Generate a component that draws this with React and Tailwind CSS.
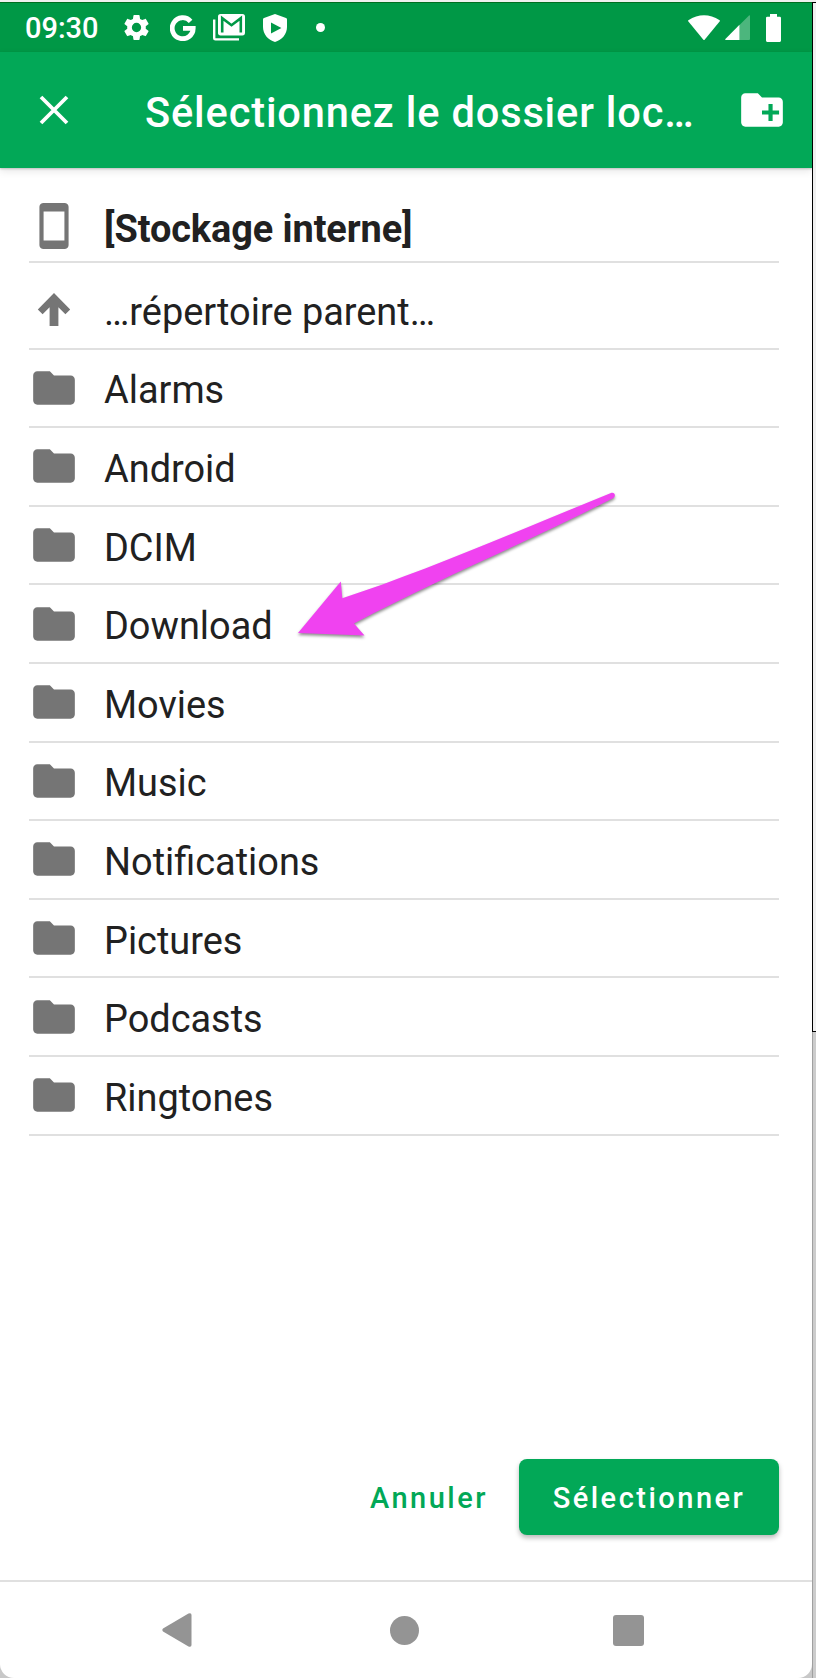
const folders = [
  "Alarms",
  "Android",
  "DCIM",
  "Download",
  "Movies",
  "Music",
  "Notifications",
  "Pictures",
  "Podcasts",
  "Ringtones",
];

function FolderIcon() {
  return (
    <svg viewBox="0 0 24 24" className="h-[50px] w-[50px] fill-[#757575]">
      <path d="M10 4H4c-1.1 0-2 .9-2 2v12c0 1.1.9 2 2 2h16c1.1 0 2-.9 2-2V8c0-1.1-.9-2-2-2h-8z" />
    </svg>
  );
}

function StatusBar() {
  return (
    <div className="flex h-[50px] items-center border-t border-[#006f20] bg-[#009846] pl-[25px] text-white">
      <span className="w-[99px] pt-px text-[29px] font-medium leading-[34px]">09:30</span>
      <svg viewBox="0 0 24 24" className="h-[31px] w-[31px] -ml-[3px] shrink-0 fill-white">
        <path d="M19.14 12.94c.04-.3.06-.61.06-.94s-.02-.64-.07-.94l2.03-1.58c.18-.14.23-.41.12-.61l-1.92-3.32c-.12-.22-.37-.29-.59-.22l-2.39.96c-.5-.38-1.03-.7-1.62-.94l-.36-2.54c-.04-.24-.24-.41-.48-.41h-3.84c-.24 0-.43.17-.47.41l-.36 2.54c-.59.24-1.13.57-1.62.94l-2.39-.96c-.22-.08-.47 0-.59.22L2.74 8.87c-.12.21-.08.47.12.61l2.03 1.58c-.05.3-.09.63-.09.94s.02.64.07.94l-2.03 1.58c-.18.14-.23.41-.12.61l1.92 3.32c.12.22.37.29.59.22l2.39-.96c.5.38 1.03.7 1.62.94l.36 2.54c.05.24.24.41.48.41h3.84c.24 0 .44-.17.47-.41l.36-2.54c.59-.24 1.13-.56 1.62-.94l2.39.96c.22.08.47 0 .59-.22l1.92-3.32c.12-.22.07-.47-.12-.61zM12 15.6a3.6 3.6 0 1 1 0-7.2 3.6 3.6 0 0 1 0 7.2z" />
      </svg>
      <svg viewBox="0 0 26 26" className="ml-[18px] h-[26px] w-[26px] shrink-0" fill="none" stroke="#fff" strokeWidth="4.8">
        <path d="M20.6 6.3A10.5 10.5 0 1 0 23.2 13.4H13" />
      </svg>
      <svg viewBox="0 0 32 27" className="ml-[17px] h-[27px] w-[32px] shrink-0" fill="none">
        <path d="M1.2 5.5V24.2Q1.2 25.4 2.4 25.4H26" stroke="#fff" strokeWidth="2.4" />
        <rect x="5" y="0" width="27" height="21.4" rx="2.6" fill="#fff" />
        <path d="M9.2 18.6V4.2L18.5 11.2L27.8 4.2V18.6" stroke="#009846" strokeWidth="2.6" />
      </svg>
      <svg viewBox="0 0 24 28" className="ml-[18px] h-[28px] w-[24px] shrink-0 fill-white" fillRule="evenodd">
        <path d="M12 0L23 4Q24 4.3 24 5.5V13C24 20 19 26 12 28C5 26 0 20 0 13V5.5Q0 4.3 1 4ZM8 8.4V19.4L18.4 13.9Z" />
      </svg>
      <span className="ml-[29px] h-[9px] w-[9px] rounded-full bg-white" />
      <div className="ml-auto mr-[31px] flex items-center">
        <svg viewBox="0 0 32 26" className="h-[26px] w-[32px] fill-white">
          <path d="M0.3 5.2Q16-4.6 31.7 5.2L32 6L16.6 24.8Q16 25.4 15.4 24.8L0 6Z" />
        </svg>
        <svg viewBox="0 0 25 25" className="ml-[5px] h-[25px] w-[25px]">
          <path d="M24 .4Q25 0 25 1V24Q25 25 24 25H14.5V10Z" fill="#4cb67d" />
          <path d="M14.5 9.8V25H.8Q-.3 24.7.4 23.9Z" fill="#fff" />
        </svg>
        <svg viewBox="0 0 15 28" className="ml-4 h-[28px] w-[15px] fill-white">
          <path d="M4 0H11V2.8H13.8Q15 2.8 15 4V26.6Q15 28 13.8 28H1.2Q0 28 0 26.6V4Q0 2.8 1.2 2.8H4Z" />
        </svg>
      </div>
    </div>
  );
}

function Toolbar() {
  return (
    <header className="relative flex h-[116px] items-center bg-[#02a857] text-white shadow-[0_1px_2px_rgba(0,0,0,0.2),0_3px_8px_rgba(0,0,0,0.1)]">
      <svg viewBox="0 0 30 30" className="ml-[39px] h-[30px] w-[30px] shrink-0" stroke="#fff" strokeWidth="3.8">
        <path d="M2 2L28 28M28 2L2 28" />
      </svg>
      <h1 className="ml-[76px] w-[592px] whitespace-nowrap pt-[5px] text-[41.6px] font-medium leading-[50px] tracking-[0.83px]">
        Sélectionnez le dossier loc…
      </h1>
      <svg viewBox="0 0 24 24" className="h-[50px] w-[50px] shrink-0 fill-white" fillRule="evenodd">
        <path d="M20 6h-8l-2-2H4C2.9 4 2 4.9 2 6v12c0 1.1.9 2 2 2h16c1.1 0 2-.9 2-2V8c0-1.1-.9-2-2-2zM20.2 14.2h-3.1v3.1h-2v-3.1H12v-2h3.1V9.1h2v3.1h3.1z" />
      </svg>
    </header>
  );
}

export default function App() {
  return (
    <div className="relative flex h-[1678px] w-[816px] overflow-hidden bg-[#c8c8c8] font-[Roboto,sans-serif] text-[#212121]">
      <div className="flex h-full w-[812px] shrink-0 flex-col overflow-hidden rounded-b-[14px] bg-white">
        <div className="h-[2px] bg-[#f0f0f0]" />
        <StatusBar />
        <Toolbar />
        <ul className="mx-[29px] w-[750px] text-[37.9px] leading-[44px]">
          <li className="flex h-[94.6px] items-center border-b-2 border-[#e0e0e0] pt-[24px]">
            <svg viewBox="0 0 24 24" className="h-[50px] w-[50px] fill-[#757575]">
              <path d="M17 1H7c-1.1 0-2 .7-2 1.8v18.4C5 22.3 5.9 23 7 23h10c1.1 0 2-.7 2-1.8V2.8C19 1.7 18.1 1 17 1zM17 19H7V5h10z" />
            </svg>
            <span className="ml-[25px] pt-[5px] font-bold tracking-[-0.08px]">[Stockage interne]</span>
          </li>
          <li className="flex h-[87px] items-center border-b-2 border-[#e0e0e0] pt-[9px]">
            <svg viewBox="0 0 50 50" className="h-[50px] w-[50px] fill-[#757575]">
              <path d="M25 8L41.2 24.5L36.4 29.2L29.4 22.2V41H20.6V22.2L13.6 29.2L8.8 24.5Z" />
            </svg>
            <span className="ml-[25px] pt-[5px]">…répertoire parent…</span>
          </li>
          {folders.map((name) => (
            <li key={name} className="flex h-[78.6px] items-center border-b-2 border-[#e0e0e0]">
              <FolderIcon />
              <span className="ml-[25px] pt-[5px]">{name}</span>
            </li>
          ))}
        </ul>
        <div className="mt-auto flex h-[121px] justify-end pr-[33px] text-[29px] font-medium">
          <button className="mr-[31px] h-[76px] pt-[4px] tracking-[2.5px] text-[#02a857]">Annuler</button>
          <button className="h-[76px] w-[260px] rounded-[8px] bg-[#02a857] pt-[4px] tracking-[2.5px] text-white shadow-[0_3px_5px_rgba(0,0,0,0.27)]">
            Sélectionner
          </button>
        </div>
        <nav className="flex h-[98px] items-center border-t-[2px] border-[#e0e0e0] pl-[162px]">
          <svg viewBox="0 0 30 34" className="h-[34px] w-[30px] fill-[#949494]">
            <path d="M1 15.5L26.5.5Q29.5-.5 29.5 2V32Q29.5 34.5 26.5 33.5L1 18.5Q-.3 17 1 15.5Z" />
          </svg>
          <span className="ml-[198px] h-[29px] w-[29px] rounded-full bg-[#949494]" />
          <span className="ml-[194px] h-[31px] w-[31px] rounded-[3px] bg-[#949494]" />
        </nav>
      </div>
      <div className="flex w-[4px] flex-col">
        <div className="h-[2px] bg-[#f0f0f0]" />
        <div className="h-[1030px] border-y border-l border-black bg-[#f0f0f0]" />
        <div className="flex-1 border-l border-[#a0a0a0] bg-[#cccccc]" />
      </div>
      <svg
        viewBox="280 470 360 200"
        className="absolute left-[280px] top-[470px] h-[200px] w-[360px] fill-[#f042f0] drop-shadow-[0_2px_1.5px_rgba(0,0,0,0.45)]"
      >
        <path d="M298 633L340.8 581.5L342.3 598.2C420 573 515 532 611 493C615 492 616 496 613.5 498C530 541 440 578 354 623.5L364.5 635.5Z" />
      </svg>
    </div>
  );
}
